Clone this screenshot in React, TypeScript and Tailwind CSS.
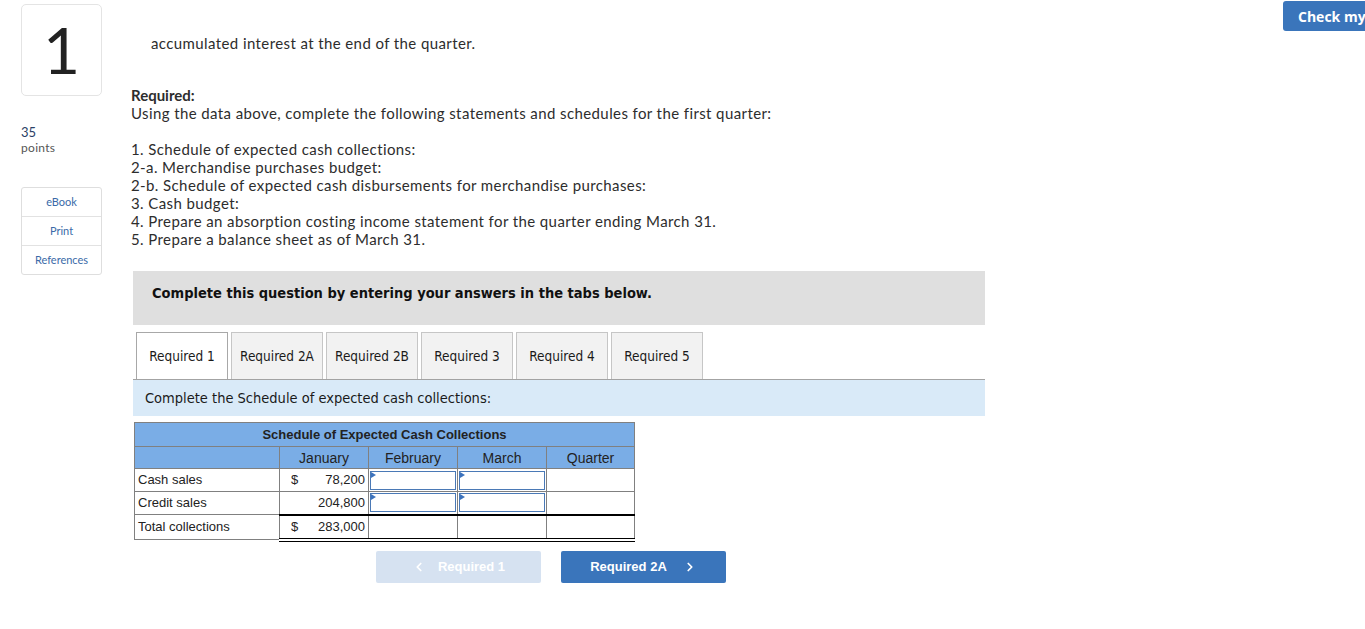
import React from "react";
import { ChevronLeft, ChevronRight } from "lucide-react";

const cond = { fontFamily: '"DejaVu Sans Condensed", "DejaVu Sans", sans-serif', fontStretch: "condensed" } as React.CSSProperties;

function InputCell() {
  return (
    <td className="p-0 border border-[#808080]">
      <div className="relative h-[19px] m-px border border-[#4a79b6]">
        <div className="absolute left-0 top-0 w-0 h-0 border-t-[3px] border-b-[3px] border-l-[5px] border-t-transparent border-b-transparent border-l-[#3d73bd]" />
      </div>
    </td>
  );
}

export default function App() {
  const tabs = ["Required 1", "Required 2A", "Required 2B", "Required 3", "Required 4", "Required 5"];
  const list = [
    "1. Schedule of expected cash collections:",
    "2-a. Merchandise purchases budget:",
    "2-b. Schedule of expected cash disbursements for merchandise purchases:",
    "3. Cash budget:",
    "4. Prepare an absorption costing income statement for the quarter ending March 31.",
    "5. Prepare a balance sheet as of March 31.",
  ];
  return (
    <div className="w-[1365px] h-[629px] overflow-hidden bg-white text-[#2d2d2d]" style={{ fontFamily: 'Lato, "Open Sans", sans-serif' }}>
      <div className="flex">
        {/* Left column */}
        <div className="w-[131px] shrink-0 pl-[21px]">
          <div className="mt-[4px] w-[81px] h-[92px] border border-[#e4e4e4] rounded-[5px] flex items-center justify-center text-[64px] leading-none text-[#222]">
            1
          </div>
          <div className="mt-[28px] text-[13px] leading-[16px] text-[#2b3f66]">35</div>
          <div className="text-[12px] leading-[16px] text-[#555] tracking-[0.3px]">points</div>
          <div className="mt-[31px] w-[81px] border border-[#dedede] rounded-[3px] text-[11px] text-[#3a6aa8]">
            <div className="h-[29px] flex items-center justify-center border-b border-[#e2e2e2]">eBook</div>
            <div className="h-[29px] flex items-center justify-center border-b border-[#e2e2e2]">Print</div>
            <div className="h-[28px] flex items-center justify-center">References</div>
          </div>
        </div>

        {/* Main column */}
        <div className="w-[860px] shrink-0 text-[15px] leading-[18px] tracking-[0.4px]">
          <div className="pt-[34px] pl-[20px]">accumulated interest at the end of the quarter.</div>
          <div className="mt-[34px] font-bold tracking-normal">Required:</div>
          <div>Using the data above, complete the following statements and schedules for the first quarter:</div>
          <div className="mt-[18px]">
            {list.map((l) => (
              <div key={l}>{l}</div>
            ))}
          </div>

          <div className="mt-[23px] ml-[2px] w-[852px] h-[54px] bg-[#dfdfdf] pl-[19px] pt-[13px] tracking-normal">
            <div className="text-[14.5px] leading-[18px] font-bold text-[#111]" style={cond}>
              Complete this question by entering your answers in the tabs below.
            </div>
          </div>

          <div className="mt-[7px] ml-[2px] w-[852px] border-b border-[#a3a3a3] flex gap-[3px] pl-[3px] tracking-normal">
            {tabs.map((t, i) => (
              <div
                key={t}
                className={
                  "w-[92px] h-[47px] flex items-center justify-center text-[13.5px] text-[#1a1a1a] border border-b-0 " +
                  (i === 0 ? "bg-white border-[#a8a8a8]" : "bg-[#f2f2f2] border-[#c6c6c6]")
                }
                style={cond}
              >
                {t}
              </div>
            ))}
          </div>

          <div className="ml-[2px] w-[852px] h-[36px] bg-[#d9eaf8] pl-[12px] flex items-center text-[14.5px] text-[#1a1a1a] tracking-normal" style={cond}>
            Complete the Schedule of expected cash collections:
          </div>

          <div className="mt-[6px] ml-[3px] tracking-normal leading-normal" style={{ fontFamily: '"Liberation Sans", Arial, sans-serif' }}>
            <table className="border-collapse text-[13px] text-[#222]">
              <colgroup>
                <col className="w-[145px]" />
                <col className="w-[89px]" />
                <col className="w-[89px]" />
                <col className="w-[89px]" />
                <col className="w-[88px]" />
              </colgroup>
              <tbody>
                <tr className="bg-[#7aade6] h-[24px]">
                  <td colSpan={5} className="border border-[#808080] text-center text-[13px] font-bold leading-[16px] p-0">
                    Schedule of Expected Cash Collections
                  </td>
                </tr>
                <tr className="bg-[#7aade6] h-[22px] text-[14px] leading-[16px]">
                  <td className="border border-[#808080] p-0"></td>
                  <td className="border border-[#808080] text-center p-0">January</td>
                  <td className="border border-[#808080] text-center p-0">February</td>
                  <td className="border border-[#808080] text-center p-0">March</td>
                  <td className="border border-[#808080] text-center p-0">Quarter</td>
                </tr>
                <tr className="h-[23px] leading-[16px]">
                  <td className="border border-[#808080] pl-[3px] py-0">Cash sales</td>
                  <td className="border border-[#808080] px-[3px] py-0">
                    <div className="flex justify-between">
                      <span className="pl-[8px]">$</span>
                      <span>78,200</span>
                    </div>
                  </td>
                  <InputCell />
                  <InputCell />
                  <td className="border border-[#808080]"></td>
                </tr>
                <tr className="h-[23px] leading-[16px]">
                  <td className="border border-[#808080] pl-[3px] py-0">Credit sales</td>
                  <td className="border border-[#808080] px-[3px] py-0 text-right">204,800</td>
                  <InputCell />
                  <InputCell />
                  <td className="border border-[#808080]"></td>
                </tr>
                <tr className="h-[25px] leading-[16px]">
                  <td className="border border-[#808080] pl-[3px] py-0">Total collections</td>
                  <td className="border-x border-x-[#808080] border-t-2 border-t-black border-b-[4px] border-b-black border-double px-[3px] py-0">
                    <div className="flex justify-between">
                      <span className="pl-[8px]">$</span>
                      <span>283,000</span>
                    </div>
                  </td>
                  <td className="border-x border-x-[#808080] border-t-2 border-t-black border-b-[4px] border-b-black border-double"></td>
                  <td className="border-x border-x-[#808080] border-t-2 border-t-black border-b-[4px] border-b-black border-double"></td>
                  <td className="border-x border-x-[#808080] border-t-2 border-t-black border-b-[4px] border-b-black border-double"></td>
                </tr>
              </tbody>
            </table>
          </div>

          <div className="mt-[9px] ml-[245px] flex gap-[20px] tracking-normal" style={{ fontFamily: '"Liberation Sans", Arial, sans-serif' }}>
            <div className="w-[165px] h-[32px] rounded-[2px] bg-[#d6e2f1] text-white font-bold text-[13px] flex items-center justify-center gap-[12px]">
              <ChevronLeft size={14} strokeWidth={3} />
              <span>Required 1</span>
            </div>
            <div className="w-[165px] h-[32px] rounded-[2px] bg-[#3a75bb] text-white font-bold text-[13px] flex items-center justify-center gap-[16px]">
              <span>Required 2A</span>
              <ChevronRight size={14} strokeWidth={3} />
            </div>
          </div>
        </div>

        <div className="flex-1 flex justify-end">
          <div className="mt-[1px] mr-[-30px] w-[112px] h-[30px] rounded-[3px] bg-[#3a75bb] text-white font-bold text-[14px] pl-[15px] flex items-center" style={{ fontFamily: '"Open Sans", sans-serif' }}>
            Check my
          </div>
        </div>
      </div>
    </div>
  );
}
